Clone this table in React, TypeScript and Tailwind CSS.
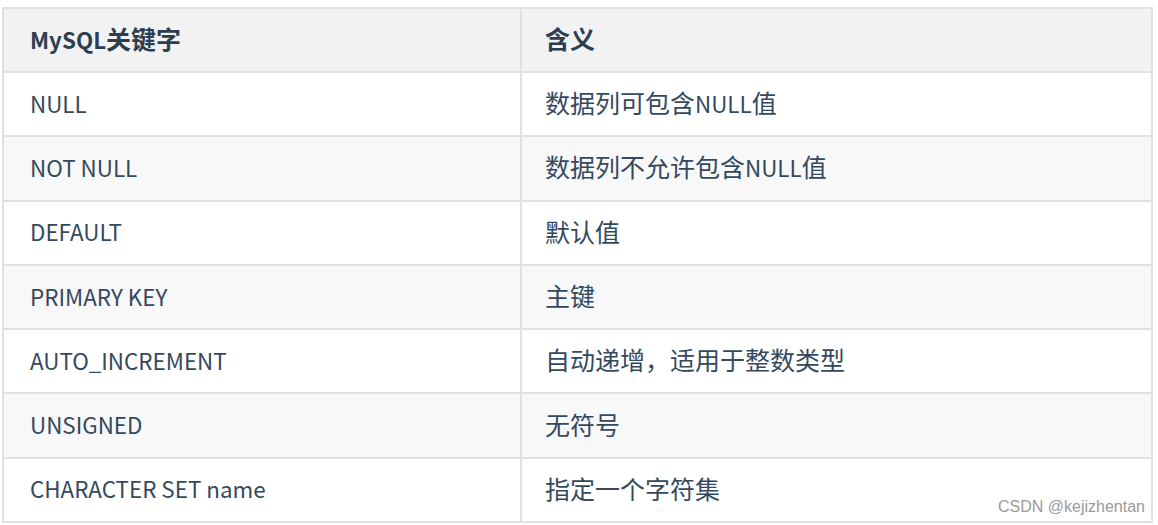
const rows: [string, string][] = [
  ["NULL", "数据列可包含NULL值"],
  ["NOT NULL", "数据列不允许包含NULL值"],
  ["DEFAULT", "默认值"],
  ["PRIMARY KEY", "主键"],
  ["AUTO_INCREMENT", "自动递增，适用于整数类型"],
  ["UNSIGNED", "无符号"],
  ["CHARACTER SET name", "指定一个字符集"],
];

// CJK glyphs in the shot are drawn a bit larger than the latin text
function Mixed({ text }: { text: string }) {
  const parts = text.match(/[\u3000-\u9fff\uff00-\uffef]+|[^\u3000-\u9fff\uff00-\uffef]+/g) ?? [];
  return (
    <>
      {parts.map((p, i) =>
        /[\u3000-\u9fff\uff00-\uffef]/.test(p) ? (
          <span key={i} className="text-[25px]">
            {p}
          </span>
        ) : (
          <span key={i}>{p}</span>
        ),
      )}
    </>
  );
}

function App() {
  return (
    <div className="relative w-[1158px] h-[525px] bg-white pt-[7px] pl-[2px] font-['Noto_Sans_CJK_SC',sans-serif]">
      <table className="w-[1151px] border-collapse text-[22.4px] leading-[30px] text-[#34495e]">
        <thead>
          <tr className="h-[64px] bg-[#f2f2f2]">
            <th className="w-[518px] border-2 border-[#dfe2e5] pl-[26px] pb-[3px] text-left font-bold text-[#2c3e50]">
              <Mixed text="MySQL关键字" />
            </th>
            <th className="border-2 border-[#dfe2e5] pl-[23px] pb-[3px] text-left font-bold text-[#2c3e50]">
              <Mixed text="含义" />
            </th>
          </tr>
        </thead>
        <tbody>
          {rows.map(([key, desc], i) => (
            <tr
              key={key}
              className={`h-[64.3px] ${i % 2 === 1 ? "bg-[#f8f8f8]" : "bg-white"}`}
            >
              <td className="border-2 border-[#dfe2e5] pl-[26px] pb-[3px]">{key}</td>
              <td className="border-2 border-[#dfe2e5] pl-[23px] pb-[3px]">
                <Mixed text={desc} />
              </td>
            </tr>
          ))}
        </tbody>
      </table>
      <div className="absolute right-[13px] top-[495px] text-[16px] text-[#9a9a9a] font-['Liberation_Sans',sans-serif]">
        CSDN @kejizhentan
      </div>
    </div>
  );
}

export default App;
